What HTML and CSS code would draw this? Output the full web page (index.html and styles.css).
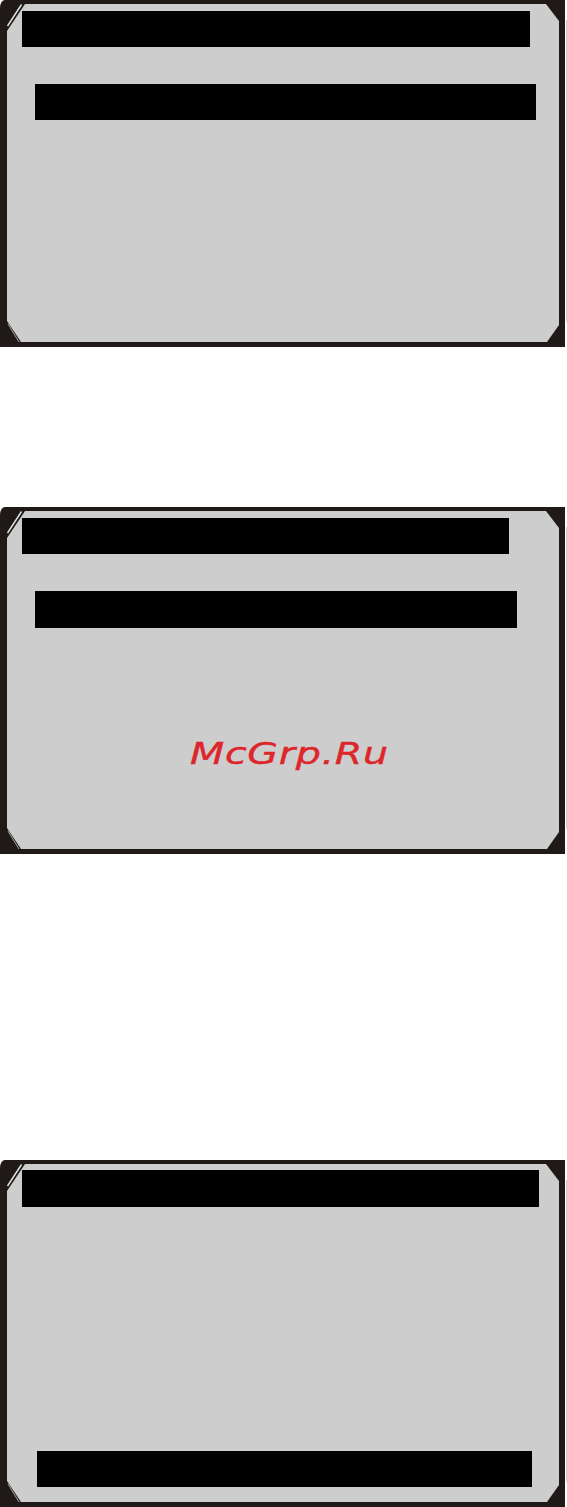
FILE: index.html
```html
<!DOCTYPE html>
<html lang="ru">
<head>
<meta charset="utf-8">
<title>Screens</title>
<link rel="stylesheet" href="styles.css">
</head>
<body>
<div class="page">
  <section class="screen screen-one">
    <svg class="corners" width="566" height="347" viewBox="0 0 566 347" aria-hidden="true">
      <polygon points="7,4 7,31 25,4" fill="#1f1a17"/>
      <line x1="7.5" y1="26" x2="21.5" y2="4.5" stroke="#e6e6e6" stroke-width="1.4"/>
      <polygon points="546,4 559,4 559,21" fill="#1f1a17"/>
      <polygon points="7,321 7,342 21,342" fill="#1f1a17"/>
      <line x1="8" y1="324" x2="19" y2="342" stroke="#a8a8a8" stroke-width="1"/>
      <polygon points="559,325 559,342 547,342" fill="#1f1a17"/>
    </svg>
    <div class="bar bar-title w508"></div>
    <div class="bar bar-item w501"></div>
  </section>

  <section class="screen screen-two">
    <svg class="corners" width="566" height="347" viewBox="0 0 566 347" aria-hidden="true">
      <polygon points="7,4 7,31 25,4" fill="#1f1a17"/>
      <line x1="7.5" y1="26" x2="21.5" y2="4.5" stroke="#e6e6e6" stroke-width="1.4"/>
      <polygon points="546,4 559,4 559,21" fill="#1f1a17"/>
      <polygon points="7,321 7,342 21,342" fill="#1f1a17"/>
      <line x1="8" y1="324" x2="19" y2="342" stroke="#a8a8a8" stroke-width="1"/>
      <polygon points="559,325 559,342 547,342" fill="#1f1a17"/>
    </svg>
    <div class="bar bar-title w487"></div>
    <div class="bar bar-item w482 tall"></div>
    <div class="watermark">McGrp.Ru</div>
  </section>

  <section class="screen screen-three">
    <svg class="corners" width="566" height="347" viewBox="0 0 566 347" aria-hidden="true">
      <polygon points="7,4 7,31 25,4" fill="#1f1a17"/>
      <line x1="7.5" y1="26" x2="21.5" y2="4.5" stroke="#e6e6e6" stroke-width="1.4"/>
      <polygon points="546,4 559,4 559,21" fill="#1f1a17"/>
      <polygon points="7,321 7,342 21,342" fill="#1f1a17"/>
      <line x1="8" y1="324" x2="19" y2="342" stroke="#a8a8a8" stroke-width="1"/>
      <polygon points="559,325 559,342 547,342" fill="#1f1a17"/>
    </svg>
    <div class="bar bar-top w517 tall"></div>
    <div class="bar bar-bottom w495"></div>
  </section>
</div>
</body>
</html>
```

FILE: styles.css
```css
html, body {
  margin: 0;
  padding: 0;
  background: #ffffff;
}

.page {
  display: flex;
  flex-direction: column;
  width: 567px;
}

.screen {
  position: relative;
  box-sizing: border-box;
  width: 565px;
  height: 347px;
  background: #cdcdcd;
  border-style: solid;
  border-color: #1f1a17;
  border-width: 4px 6px 5px 7px;
  border-top-left-radius: 5px 8px;
  display: flex;
  flex-direction: column;
  align-items: flex-start;
}

.screen::after {
  content: "";
  position: absolute;
  right: -8px;
  top: 16px;
  width: 1px;
  height: 302px;
  background: #cfcfcf;
}

.screen-two {
  margin-top: 160px;
}

.screen-three {
  margin-top: 306px;
}

.corners {
  position: absolute;
  top: -4px;
  left: -7px;
  pointer-events: none;
}

.bar {
  background: #000000;
  height: 36px;
}

.bar.tall {
  height: 37px;
}

.bar-title {
  margin-top: 7px;
  margin-left: 15px;
}

.bar-item {
  margin-top: 37px;
  margin-left: 28px;
}

.bar-top {
  margin-top: 6px;
  margin-left: 15px;
}

.bar-bottom {
  margin-top: auto;
  margin-bottom: 15px;
  margin-left: 30px;
}

.w508 { width: 508px; }
.w501 { width: 501px; }
.w487 { width: 487px; }
.w482 { width: 482px; }
.w517 { width: 517px; }
.w495 { width: 495px; }

.watermark {
  margin-top: 107px;
  margin-left: 183px;
  font-family: "DejaVu Sans", Verdana, sans-serif;
  font-style: italic;
  font-size: 31px;
  line-height: 36px;
  letter-spacing: 0.5px;
  color: #dc262a;
  transform: scaleX(1.28);
  transform-origin: left center;
  -webkit-text-stroke: 0.4px #dc262a;
}
```
